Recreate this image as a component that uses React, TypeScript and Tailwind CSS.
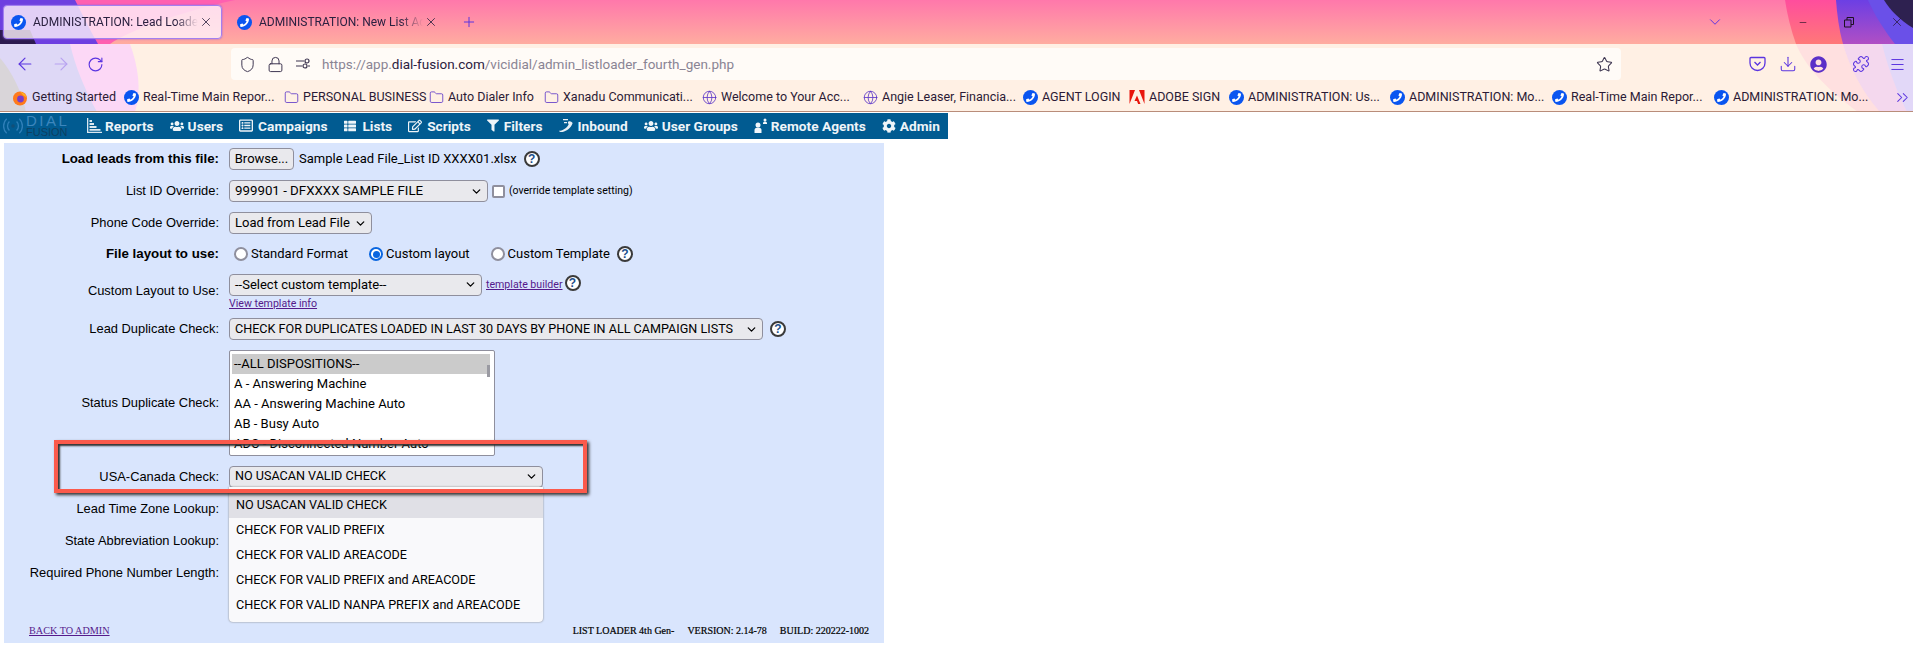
import React from "react";
import {
  ArrowLeft,
  ArrowRight,
  RotateCw,
  Shield,
  Lock,
  Star,
  Download,
  Puzzle,
  Menu,
  ChevronDown,
  ChevronsRight,
  Folder,
  Globe,
  X,
  Plus,
  Minus,
} from "lucide-react";
import {
  FaPhoneAlt,
  FaUsers,
  FaRegListAlt,
  FaThList,
  FaRegEdit,
  FaFilter,
  FaCog,
  FaUserCircle,
} from "react-icons/fa";

const ui = "font-['Roboto','Noto_Sans',sans-serif]";

const PhoneDot = ({ className = "" }: { className?: string }) => (
  <span className={`flex h-[15px] w-[15px] shrink-0 items-center justify-center rounded-full bg-[#0a55f0] text-white ${className}`}>
    <FaPhoneAlt className="h-[9px] w-[9px] -scale-x-100" />
  </span>
);

const ThemeArt = () => (
  <svg className="absolute left-0 top-0" width="1913" height="112" viewBox="0 0 1913 112">
    <defs>
      <linearGradient id="strip" x1="0" y1="0" x2="0" y2="1">
        <stop offset="0" stopColor="#ff78ab" />
        <stop offset="1" stopColor="#ffaca0" />
      </linearGradient>
      <linearGradient id="hot" x1="0" y1="0" x2="0" y2="1">
        <stop offset="0" stopColor="#ff4d9d" />
        <stop offset="1" stopColor="#ff7878" />
      </linearGradient>
      <linearGradient id="violet" x1="0" y1="0" x2="0" y2="1">
        <stop offset="0" stopColor="#6c3fe4" />
        <stop offset="1" stopColor="#b04fc4" />
      </linearGradient>
    </defs>
    <rect width="1913" height="44" fill="url(#strip)" />
    <path d="M0 0H235C180 12 130 30 110 44H0Z" fill="#ff5fb0" />
    <path d="M0 0H75C82 14 90 30 98 44H0Z" fill="#6d3fe0" />
    <path d="M0 30H30L36 44H0Z" fill="#2c1a50" />
    <path d="M1785 0H1913V44H1796C1791 30 1787 14 1785 0Z" fill="url(#hot)" />
    <path d="M1836 0H1913V44H1843C1839 30 1837 14 1836 0Z" fill="url(#violet)" />
    <path d="M1868 0H1913V44H1895C1884 30 1874 14 1868 0Z" fill="#6a50e8" />
    <path d="M1884 0H1913V28C1900 20 1890 10 1884 0Z" fill="#2e2150" />
    <rect y="44" width="1913" height="68" fill="#fff0e4" />
    <path d="M0 44H130C138 66 142 90 135 112H0Z" fill="#fcd8f6" />
    <path d="M0 44H70C75 66 85 90 97 112H0Z" fill="#ded8f6" />
    <path d="M0 58C12 72 22 92 26 112H0Z" fill="#d9d5d9" />
    <path d="M1796 44H1913V112H1858C1830 92 1806 68 1796 44Z" fill="#ffe0e0" />
    <path d="M1843 44H1913V112H1880C1862 92 1850 68 1843 44Z" fill="#f4d8ee" />
    <path d="M1882 44H1913V112H1907C1897 92 1888 68 1882 44Z" fill="#e2d8f8" />
    <rect y="111" width="1913" height="2" fill="#b98d7a" />
  </svg>
);

const Tab = ({ title, active }: { title: string; active?: boolean }) => (
  <div
    className={`flex h-[34px] items-center ${
      active
        ? "w-[219px] rounded-[4px] border border-[#a27ff0] bg-[#fff4fb]/80 pl-[7px] shadow-[0_0_2px_#8a60e0]"
        : "ml-[13px] w-[203px] pl-[2px]"
    }`}
  >
    <PhoneDot className="mr-[5px]" />
    <span
      className={`w-[167px] overflow-hidden whitespace-nowrap pl-[2px] text-[12px] text-[#2b2140] ${ui} [mask-image:linear-gradient(to_right,black_86%,transparent)]`}
    >
      {title}
    </span>
    <X className="ml-[1px] h-[14px] w-[14px] shrink-0 text-[#2b2140]" strokeWidth={1.4} />
  </div>
);

const TabStrip = () => (
  <div className="relative flex h-[44px] items-center pl-[3px]">
    <Tab title="ADMINISTRATION: Lead Loade" active />
    <Tab title="ADMINISTRATION: New List Ad" />
    <Plus className="ml-[23px] h-[16px] w-[16px] text-[#5b35e0]" strokeWidth={1.5} />
    <div className="ml-auto flex items-center">
      <ChevronDown className="mr-[74px] h-[18px] w-[18px] text-[#5b35e0]" strokeWidth={1.3} />
      <Minus className="mr-[36px] h-[11px] w-[10px] text-[#1c1020]" strokeWidth={1.5} />
      <svg className="mr-[36px]" width="10" height="11" viewBox="0 0 10 11" fill="none" stroke="#1c1020">
        <path d="M.5 3h6.500v7H.5zM3 3V.5h6.500v7H7" />
      </svg>
      <X className="mr-[9px] h-[14px] w-[14px] text-[#1c1020]" strokeWidth={1.1} />
    </div>
  </div>
);

const AddressBar = () => (
  <div className="relative flex h-[40px] items-center">
    <ArrowLeft className="ml-[15px] h-[20px] w-[20px] text-[#5b35e0]" strokeWidth={1.4} />
    <ArrowRight className="ml-[16px] h-[20px] w-[20px] text-[#b8a2f0]" strokeWidth={1.4} />
    <RotateCw className="ml-[16px] h-[17px] w-[17px] text-[#5b35e0]" strokeWidth={1.6} />
    <div className="ml-[127px] flex h-[32px] w-[1390px] items-center rounded-[4px] bg-[#fffbf7] pl-[8px]">
      <Shield className="h-[17px] w-[17px] text-[#3d3550]" strokeWidth={1.4} />
      <Lock className="ml-[11px] h-[17px] w-[17px] text-[#3d3550]" strokeWidth={1.4} />
      <svg className="ml-[11px]" width="16" height="14" viewBox="0 0 16 14" fill="none" stroke="#3d3550" strokeWidth="1.2">
        <path d="M1 4h8M13 9h2M1 9h6" />
        <circle cx="12" cy="4" r="2" />
        <circle cx="10" cy="9" r="2" />
      </svg>
      <span className={`ml-[11px] text-[13.500px] text-[#8a8494] ${ui}`}>
        https://app.<span className="text-[#2b2140]">dial-fusion.com</span>/vicidial/admin_listloader_fourth_gen.php
      </span>
      <Star className="ml-auto mr-[8px] h-[17px] w-[17px] text-[#3d3550]" strokeWidth={1.5} />
    </div>
    <svg className="ml-[128px]" width="17" height="16" viewBox="0 0 17 16" fill="none" stroke="#5b35e0" strokeWidth="1.3">
      <path d="M2 1.500h13a1 1 0 0 1 1 1V7a7.500 7.500 0 0 1-15 0V2.500a1 1 0 0 1 1-1Z" />
      <path d="M5.500 6l3 3 3-3" />
    </svg>
    <Download className="ml-[13px] h-[18px] w-[18px] text-[#5b35e0]" strokeWidth={1.4} />
    <FaUserCircle className="ml-[13px] h-[17px] w-[17px] text-[#5b2fc8]" />
    <Puzzle className="ml-[25px] h-[18px] w-[18px] text-[#5b35e0]" strokeWidth={1.4} />
    <Menu className="ml-[19px] h-[17px] w-[17px] text-[#5b35e0]" strokeWidth={1.4} />
  </div>
);

type Mark = "phone" | "folder" | "globe" | "fox" | "adobe";

const MarkIcon = ({ kind }: { kind: Mark }) => {
  if (kind === "phone") return <PhoneDot />;
  if (kind === "folder") return <Folder className="h-[15px] w-[15px] text-[#5b35c8]" strokeWidth={1.3} />;
  if (kind === "globe") return <Globe className="h-[15px] w-[15px] text-[#5b35c8]" strokeWidth={1.3} />;
  if (kind === "adobe")
    return (
      <svg width="16" height="15" viewBox="0 0 15 15">
        <path d="M0 0h5.500L0 14ZM15 0H9.500L15 14ZM7.500 5.500 11 14H8.600L7.500 11H5Z" fill="#e8150c" />
      </svg>
    );
  return (
    <svg width="16" height="16" viewBox="0 0 16 16">
      <circle cx="8" cy="8.500" r="7" fill="#ff7a1c" />
      <path d="M8 1.500c3 1 6 3 6.600 6L11 5Z" fill="#ffb81f" />
      <circle cx="8.500" cy="9" r="3.400" fill="#7a3ec8" />
    </svg>
  );
};

const bookmarks: { kind: Mark; label: string; width: string }[] = [
  { kind: "fox", label: "Getting Started", width: "w-[112px]" },
  { kind: "phone", label: "Real-Time Main Repor...", width: "w-[160px]" },
  { kind: "folder", label: "PERSONAL BUSINESS", width: "w-[145px]" },
  { kind: "folder", label: "Auto Dialer Info", width: "w-[115px]" },
  { kind: "folder", label: "Xanadu Communicati...", width: "w-[158px]" },
  { kind: "globe", label: "Welcome to Your Acc...", width: "w-[161px]" },
  { kind: "globe", label: "Angie Leaser, Financia...", width: "w-[160px]" },
  { kind: "phone", label: "AGENT LOGIN", width: "w-[106px]" },
  { kind: "adobe", label: "ADOBE SIGN", width: "w-[100px]" },
  { kind: "phone", label: "ADMINISTRATION: Us...", width: "w-[161px]" },
  { kind: "phone", label: "ADMINISTRATION: Mo...", width: "w-[162px]" },
  { kind: "phone", label: "Real-Time Main Repor...", width: "w-[162px]" },
  { kind: "phone", label: "ADMINISTRATION: Mo...", width: "w-[170px]" },
];

const BookmarkBar = () => (
  <div className="relative flex h-[27px] items-center pl-[12px]">
    {bookmarks.map((b, i) => (
      <div key={i} className={`flex shrink-0 items-center gap-[4px] ${b.width}`}>
        <MarkIcon kind={b.kind} />
        <span className={`whitespace-nowrap text-[12.500px] text-[#2b1a35] ${ui}`}>{b.label}</span>
      </div>
    ))}
    <ChevronsRight className="ml-auto mr-[1px] h-[19px] w-[19px] text-[#5b35e0]" strokeWidth={1.3} />
  </div>
);

const ReportsIcon = () => (
  <svg width="15" height="15" viewBox="0 0 15 15" fill="#dbe7f0">
    <path d="M0 0h1.300v13.700H15V15H0Z" />
    <path d="M2.500 2h2.500v2H2.500zM2.500 5h4.500v2H2.500zM2.500 8h7v2h-7zM2.500 11h11v1.700h-11z" />
  </svg>
);

const InboundIcon = () => (
  <svg width="15" height="15" viewBox="0 0 15 15" fill="#e8f0f6">
    <path d="M13.500 5.500c-1.500 4-5.500 7.500-10 8.500-1.500.3-3.500-.2-3.500-1.200 2.500.2 7-1.700 9.500-6 .6-1-1.200-1.600-.5-3 .5-.8 1.500-.8 2.500-.3.8.3 2.300 1 2 2Z" />
    <path d="M4 1h5v1.300H4zM5 4h3v1.300H5z" />
  </svg>
);

const RemoteIcon = () => (
  <svg width="14" height="15" viewBox="0 0 14 15" fill="#f2f6fa">
    <circle cx="4" cy="7" r="2.500" />
    <path d="M.5 15v-3a3.500 2.500 0 0 1 7 0v3Z" />
    <circle cx="11" cy="2" r="1.500" />
    <path d="M9 6V5a2 1.500 0 0 1 4 0v1Z" />
  </svg>
);

const navItems: { label: string; icon: React.ReactNode; gap: string }[] = [
  { label: "Reports", icon: <ReportsIcon />, gap: "gap-[3px]" },
  { label: "Users", icon: <FaUsers className="h-[14px] w-[14px]" />, gap: "gap-[4px]" },
  { label: "Campaigns", icon: <FaRegListAlt className="h-[15px] w-[14px]" />, gap: "gap-[5px]" },
  { label: "Lists", icon: <FaThList className="h-[12px] w-[14px]" />, gap: "gap-[5px]" },
  { label: "Scripts", icon: <FaRegEdit className="h-[14px] w-[14px]" />, gap: "gap-[5px]" },
  { label: "Filters", icon: <FaFilter className="h-[13px] w-[12px]" />, gap: "gap-[5px]" },
  { label: "Inbound", icon: <InboundIcon />, gap: "gap-[4px]" },
  { label: "User Groups", icon: <FaUsers className="h-[14px] w-[14px]" />, gap: "gap-[4px]" },
  { label: "Remote Agents", icon: <RemoteIcon />, gap: "gap-[3px]" },
  { label: "Admin", icon: <FaCog className="h-[14px] w-[14px]" />, gap: "gap-[4px]" },
];

const Logo = () => (
  <div className="flex w-[87px] items-center pl-[3px]">
    <svg width="20" height="18" viewBox="0 0 22 20" fill="none" stroke="#2f7fb8" strokeWidth="1.500">
      <path d="M4 2a11 11 0 0 0 0 16M18 2a11 11 0 0 1 0 16M7 5a7 7 0 0 0 0 10M15 5a7 7 0 0 1 0 10" />
      <circle cx="11" cy="10" r="2" fill="#124f78" stroke="none" />
    </svg>
    <div className="ml-[3px] flex flex-col font-['Liberation_Sans',sans-serif]">
      <span className="text-[15px] leading-[12px] tracking-[2.500px] text-[#3d86bd]">DIAL</span>
      <span className="text-[11px] leading-[11px] text-[#0d4062]">FUSION</span>
    </div>
  </div>
);

const NavBar = () => (
  <div className="flex h-[26px] w-[948px] items-center bg-[#015b91]">
    <Logo />
    <div className="flex items-center gap-[16px]">
      {navItems.map((n) => (
        <div key={n.label} className={`flex items-center whitespace-nowrap text-[#eef4f8] ${n.gap}`}>
          {n.icon}
          <span className="font-['Roboto',sans-serif] text-[13.700px] font-bold">{n.label}</span>
        </div>
      ))}
    </div>
  </div>
);

const Select = ({ label, width, size }: { label: string; width: string; size?: string }) => (
  <div
    className={`flex h-[22px] items-center justify-between rounded-[4px] border border-[#8f8f9d] bg-[#e9e9ed] pl-[5px] pr-[4px] text-black ${ui} ${width} ${size ?? "text-[13px]"}`}
  >
    <span className="whitespace-nowrap">{label}</span>
    <ChevronDown className="h-[13px] w-[13px] shrink-0" strokeWidth={2.4} />
  </div>
);

const Help = () => (
  <span className="flex h-[16px] w-[16px] shrink-0 items-center justify-center rounded-full border-2 border-[#3a3a3a] bg-white font-['Liberation_Sans',sans-serif] text-[12px] font-bold leading-none text-[#1d4f8c]">
    ?
  </span>
);

const Radio = ({ checked }: { checked?: boolean }) => (
  <span
    className={`flex h-[14px] w-[14px] shrink-0 items-center justify-center rounded-full bg-white ${
      checked ? "border-2 border-[#0a66e0]" : "border-2 border-[#8f8f9d]"
    }`}
  >
    {checked && <span className="h-[7px] w-[7px] rounded-full bg-[#0a66e0]" />}
  </span>
);

const Row = ({
  label,
  bold,
  height,
  children,
}: {
  label: string;
  bold?: boolean;
  height: string;
  children?: React.ReactNode;
}) => (
  <div className={`flex items-center ${height}`}>
    <div
      className={`w-[215px] shrink-0 text-right font-['Liberation_Sans',sans-serif] text-black ${
        bold ? "text-[13.300px] font-bold" : "text-[12.900px]"
      }`}
    >
      {label}
    </div>
    <div className={`ml-[10px] flex items-center text-[13px] text-black ${ui}`}>{children}</div>
  </div>
);

const dispositions = [
  "--ALL DISPOSITIONS--",
  "A - Answering Machine",
  "AA - Answering Machine Auto",
  "AB - Busy Auto",
  "ADC - Disconnected Number Auto",
];

const usacan = [
  "NO USACAN VALID CHECK",
  "CHECK FOR VALID PREFIX",
  "CHECK FOR VALID AREACODE",
  "CHECK FOR VALID PREFIX and AREACODE",
  "CHECK FOR VALID NANPA PREFIX and AREACODE",
];

const Form = () => (
  <div className="relative ml-[4px] mt-[4px] h-[500px] w-[880px] bg-[#d9e5fd]">
    <Row label="Load leads from this file:" bold height="h-[32px]">
      <div className="flex h-[22px] w-[65px] items-center justify-center rounded-[4px] border border-[#8f8f9d] bg-[#e9e9ed]">
        Browse...
      </div>
      <span className="ml-[5px]">Sample Lead File_List ID XXXX01.xlsx</span>
      <span className="ml-[7px]">
        <Help />
      </span>
    </Row>
    <Row label="List ID Override:" height="h-[32px]">
      <Select label="999901 - DFXXXX SAMPLE FILE" width="w-[259px]" size="text-[13.300px]" />
      <span className="ml-[4px] h-[13px] w-[13px] rounded-[2px] border-2 border-[#8f8f9d] bg-white" />
      <span className="ml-[4px] text-[10.500px]">(override template setting)</span>
    </Row>
    <Row label="Phone Code Override:" height="h-[32px]">
      <Select label="Load from Lead File" width="w-[143px]" />
    </Row>
    <Row label="File layout to use:" bold height="h-[30px]">
      <span className="ml-[5px]">
        <Radio />
      </span>
      <span className="ml-[3px]">Standard Format</span>
      <span className="ml-[21px]">
        <Radio checked />
      </span>
      <span className="ml-[3px]">Custom layout</span>
      <span className="ml-[21px]">
        <Radio />
      </span>
      <span className="ml-[3px]">Custom Template</span>
      <span className="ml-[7px]">
        <Help />
      </span>
    </Row>
    <Row label="Custom Layout to Use:" height="h-[43px]">
      <div className="flex flex-col">
        <div className="flex items-center">
          <Select label="--Select custom template--" width="w-[253px]" />
          <span className="ml-[4px] text-[10.600px] text-[#551a8b] underline">template builder</span>
          <span className="-mt-[4px] ml-[2px]">
            <Help />
          </span>
        </div>
        <span className="mb-[-4px] text-[10.600px] text-[#551a8b] underline">View template info</span>
      </div>
    </Row>
    <Row label="Lead Duplicate Check:" height="h-[34px]">
      <Select
        label="CHECK FOR DUPLICATES LOADED IN LAST 30 DAYS BY PHONE IN ALL CAMPAIGN LISTS"
        width="w-[534px]"
        size="text-[12.600px]"
      />
      <span className="ml-[7px]">
        <Help />
      </span>
    </Row>
    <Row label="Status Duplicate Check:" height="h-[114px]">
      <div className="relative h-[106px] w-[266px] overflow-hidden rounded-[2px] border border-[#8f8f9d] bg-white pl-[2px] pt-[3px]">
        {dispositions.map((d, i) => (
          <div key={d} className={`h-[20px] w-[258px] pl-[2px] leading-[20px] ${i === 0 ? "bg-[#cbcbcb]" : ""}`}>
            {d}
          </div>
        ))}
        <span className="absolute right-[4px] top-[14px] h-[12px] w-[3px] bg-[#9a9aa2]" />
      </div>
    </Row>
    <Row label="USA-Canada Check:" height="h-[33px]">
      <Select label="NO USACAN VALID CHECK" width="w-[314px]" size="text-[12.600px]" />
    </Row>
    <Row label="Lead Time Zone Lookup:" height="h-[32px]" />
    <Row label="State Abbreviation Lookup:" height="h-[32px]" />
    <Row label="Required Phone Number Length:" height="h-[32px]" />
    <div className="flex h-[54px] items-end justify-between pb-[5px] pl-[25px] pr-[15px] font-['Liberation_Serif',serif] text-[10.200px] text-black">
      <span className="text-[#551a8b] underline">BACK TO ADMIN</span>
      <span className="flex gap-[13px] text-[10px] [-webkit-text-stroke:0.2px_black]">
        <span>LIST LOADER 4th Gen-</span>
        <span>VERSION: 2.14-78</span>
        <span>BUILD: 220222-1002</span>
      </span>
    </div>

    {/* open dropdown of the USA-Canada select */}
    <div
      className={`absolute left-[225px] top-[344px] z-10 h-[135px] w-[314px] overflow-hidden rounded-b-[4px] bg-[#f9f9fb] text-[12.600px] text-black shadow-[0_0_2px_#777] ${ui}`}
    >
      <div className="h-[6px]" />
      {usacan.map((o, i) => (
        <div key={o} className={`flex h-[25px] items-center pl-[7px] ${i === 0 ? "bg-[#e0e0e6]" : ""}`}>
          {o}
        </div>
      ))}
    </div>

    {/* red highlight drawn over the screenshot */}
    <div className="absolute left-[50px] top-[297px] z-20 h-[53px] w-[533px] border-[4px] border-[#fb5a4c] shadow-[2px_2px_3px_#333,inset_2px_2px_2px_#333]" />
  </div>
);

export default function App() {
  return (
    <div className="h-[665px] w-[1913px] overflow-hidden bg-white">
      <div className="relative h-[113px]">
        <ThemeArt />
        <TabStrip />
        <AddressBar />
        <BookmarkBar />
      </div>
      <NavBar />
      <Form />
    </div>
  );
}
